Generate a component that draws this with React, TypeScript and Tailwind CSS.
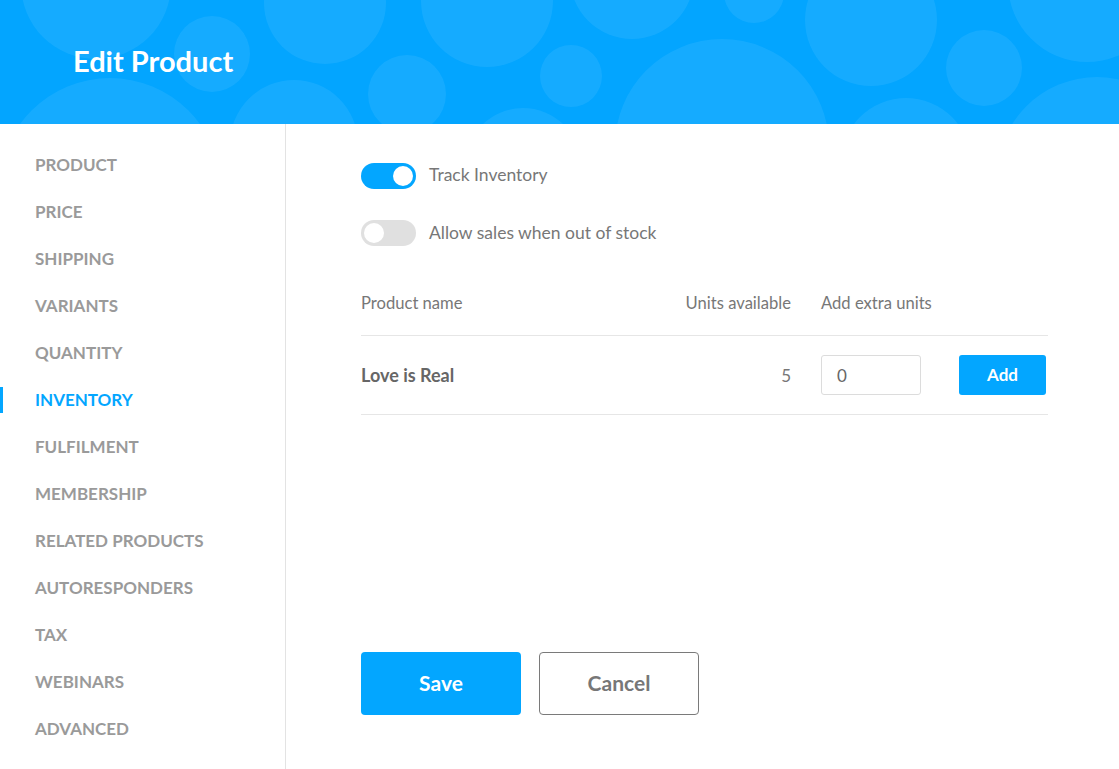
import React from "react";

const circles: [number, number, number][] = [
  [96, -16, 75],
  [212, 54, 38],
  [325, 3, 61],
  [487, 1, 66],
  [110, 189, 111],
  [294, 144, 64],
  [407, 94, 39],
  [571, 76, 31],
  [523, 166, 58],
  [632, -23, 62],
  [754, -7, 30],
  [871, 20, 66],
  [984, 68, 38],
  [1087, -17, 79],
  [722, 146, 107],
  [906, 163, 65],
  [1097, 177, 100],
];

const navItems = [
  "PRODUCT",
  "PRICE",
  "SHIPPING",
  "VARIANTS",
  "QUANTITY",
  "INVENTORY",
  "FULFILMENT",
  "MEMBERSHIP",
  "RELATED PRODUCTS",
  "AUTORESPONDERS",
  "TAX",
  "WEBINARS",
  "ADVANCED",
];

function Toggle({ on }: { on: boolean }) {
  return (
    <div
      className={`w-[55px] h-[26px] rounded-full flex items-center px-[3px] ${
        on ? "bg-[#03a6ff] justify-end" : "bg-[#e0e0e0] justify-start"
      }`}
    >
      <div className="w-[20px] h-[20px] rounded-full bg-white" />
    </div>
  );
}

export default function App() {
  return (
    <div
      className="w-[1119px] h-[769px] bg-white overflow-hidden flex flex-col"
      style={{ fontFamily: '"Lato", "Noto Sans", sans-serif' }}
    >
      <header className="relative h-[124px] bg-[#03a5ff] overflow-hidden flex items-center shrink-0">
        <svg
          className="absolute inset-0"
          width="1119"
          height="124"
          viewBox="0 0 1119 124"
        >
          {circles.map(([cx, cy, r], i) => (
            <circle key={i} cx={cx} cy={cy} r={r} fill="#ffffff" fillOpacity={0.075} />
          ))}
        </svg>
        <h1 className="relative pl-[73px] -mt-[4px] text-white text-[29px] font-bold leading-none">
          Edit Product
        </h1>
      </header>

      <div className="flex flex-1">
        <aside className="w-[286px] border-r border-[#e3e3e3] pt-[17px] shrink-0">
          <nav className="flex flex-col">
            {navItems.map((item) => {
              const active = item === "INVENTORY";
              return (
                <div key={item} className="relative h-[47px] flex items-center">
                  {active && (
                    <span className="absolute left-0 top-[11px] w-[3px] h-[26px] bg-[#03a6ff]" />
                  )}
                  <span
                    className={`pl-[35px] text-[17px] font-bold ${
                      active ? "text-[#03a6ff]" : "text-[#9a9a9a]"
                    }`}
                  >
                    {item}
                  </span>
                </div>
              );
            })}
          </nav>
        </aside>

        <main className="flex-1 pl-[75px] pr-[71px] flex flex-col">
          <div className="pt-[39px] flex flex-col gap-[31px]">
            <div className="flex items-center gap-[13px]">
              <Toggle on />
              <span className="text-[17.5px] text-[#777] -mt-[1px]">Track Inventory</span>
            </div>
            <div className="flex items-center gap-[13px]">
              <Toggle on={false} />
              <span className="text-[17.5px] text-[#777]">Allow sales when out of stock</span>
            </div>
          </div>

          <div className="mt-[27px]">
            <div className="flex items-center h-[63px] border-b border-[#e6e6e6] pb-[1px] text-[16.6px] text-[#777]">
              <div className="flex-1">Product name</div>
              <div className="w-[140px] text-right">Units available</div>
              <div className="w-[227px] ml-[30px]">Add extra units</div>
            </div>
            <div className="flex items-center h-[79px] border-b border-[#e6e6e6]">
              <div className="flex-1 text-[18px] font-bold text-[#666]">Love is Real</div>
              <div className="w-[140px] text-right text-[17px] text-[#777]">5</div>
              <div className="w-[227px] ml-[30px] flex items-center">
                <div className="w-[100px] h-[40px] border border-[#dcdcdc] rounded-[3px] flex items-center pl-[15px] text-[17px] text-[#666]">
                  0
                </div>
                <button className="ml-[38px] w-[87px] h-[40px] rounded-[3px] bg-[#03a6ff] text-white text-[17px] font-bold pb-[1px]">
                  Add
                </button>
              </div>
            </div>
          </div>

          <div className="mt-[237px] flex gap-[18px]">
            <button className="w-[160px] h-[63px] rounded-[4px] bg-[#03a6ff] text-white text-[21px] font-bold pb-[3px]">
              Save
            </button>
            <button className="w-[160px] h-[63px] rounded-[4px] border border-[#7a7a7a] text-[#777] text-[21px] font-bold pb-[3px]">
              Cancel
            </button>
          </div>
        </main>
      </div>
    </div>
  );
}
